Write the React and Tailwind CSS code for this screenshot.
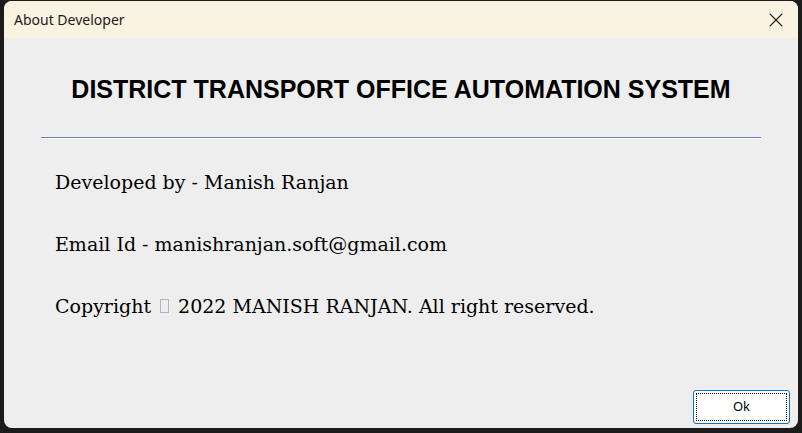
import { X } from 'lucide-react';

const App = () => {
    return (
        <div className="w-[802px] h-[433px] bg-[#1c1c1c] pl-[4px] pt-[1px] overflow-hidden">
            <div className="w-[794px] h-[427px] rounded-[8px] overflow-hidden bg-[#eeeeee] flex flex-col">
                {/* title bar */}
                <div className="h-[37px] bg-[#f9f3e1] flex items-center justify-between pl-[10px] pr-[10px]">
                    <span className="text-[14px] text-[#1a1a1a]" style={{ fontFamily: '"Noto Sans", sans-serif' }}>
                        About Developer
                    </span>
                    <X size={24} strokeWidth={1.1} className="text-[#222]" />
                </div>

                <div className="flex-1 flex flex-col">
                    <h1
                        className="mt-[37px] text-center text-[25px] leading-[29px] font-bold text-black"
                        style={{ fontFamily: '"Liberation Sans", Arial, sans-serif' }}
                    >
                        DISTRICT TRANSPORT OFFICE AUTOMATION SYSTEM
                    </h1>

                    <div className="mt-[33px] mx-[37px] border-t border-[#6f82c2] border-b border-b-white" />

                    <div
                        className="mt-[32px] ml-[51px] flex flex-col gap-[40px] text-[19px] leading-[22px] text-black"
                        style={{ fontFamily: '"DejaVu Serif", serif' }}
                    >
                        <p>Developed by - Manish Ranjan</p>
                        <p>Email Id - manishranjan.soft@gmail.com</p>
                        <p className="flex items-center">
                            Copyright
                            <span className="inline-block w-[9px] h-[14px] border border-[#b8b0c8] mx-[9px]" />
                            2022 MANISH RANJAN. All right reserved.
                        </p>
                    </div>

                    <div className="mt-auto mb-[4px] mr-[8px] flex justify-end">
                        <button className="w-[97px] h-[34px] bg-white border border-[#0a74d0] rounded-[3px] p-[2px]">
                            <div
                                className="w-full h-full border border-dotted border-black flex items-center justify-center text-[13px] text-black"
                                style={{ fontFamily: '"Noto Sans", sans-serif' }}
                            >
                                Ok
                            </div>
                        </button>
                    </div>
                </div>
            </div>
        </div>
    );
};

export default App;
